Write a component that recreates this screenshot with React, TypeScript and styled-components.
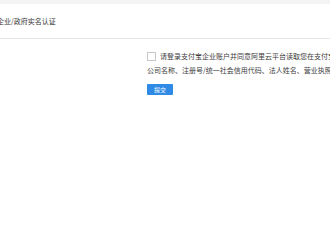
import styled, { createGlobalStyle } from 'styled-components';

const GlobalStyle = createGlobalStyle`
    html, body {
        margin: 0;
        padding: 0;
        background: #fff;
        overflow: hidden;
    }
    body {
        font-family: "Noto Sans CJK SC", "Liberation Sans", sans-serif;
    }
`;

const Page = styled.div`
    width: 330px;
    height: 200px;
    overflow: hidden;
    background: #f4f4f4;
    padding-top: 4px;
    box-sizing: border-box;
    display: flex;
    flex-direction: column;
`;

const Header = styled.div`
    height: 35px;
    flex: none;
    background: #fff;
    border-bottom: 1px solid #e6e6e6;
    display: flex;
    align-items: center;
    padding-top: 1px;
    box-sizing: border-box;
`;

const Title = styled.h1`
    margin: 0 0 0 -3px;
    font-size: 7px;
    line-height: 9px;
    font-weight: 400;
    color: #333;
    white-space: nowrap;
`;

const Body = styled.div`
    flex: 1;
    background: #fff;
    padding: 13px 0 0 147px;
    box-sizing: border-box;
    font-size: 7px;
    line-height: 9px;
`;

const AgreeRow = styled.label`
    display: flex;
    align-items: center;
    gap: 4px;
    height: 9px;
    white-space: nowrap;
`;

const Box = styled.span`
    width: 7px;
    height: 7px;
    border: 1px solid #c8c8c8;
    background: #fff;
    flex: none;
`;

const Text = styled.span`
    font-size: 7px;
    line-height: 9px;
    color: #3c3c3c;
    white-space: nowrap;
`;

const Line = styled.div`
    margin-top: 5px;
    height: 9px;
    white-space: nowrap;
`;

const Submit = styled.button`
    margin-top: 9px;
    width: 26px;
    height: 11px;
    border: none;
    border-radius: 1px;
    background: #2f8ae5;
    color: #fff;
    font-family: "Noto Sans CJK SC", sans-serif;
    font-size: 6px;
    line-height: 11px;
    padding: 0;
    display: block;
`;

export default function App() {
    return (
        <>
            <GlobalStyle />
            <Page>
                <Header>
                    <Title>企业/政府实名认证</Title>
                </Header>
                <Body>
                    <AgreeRow>
                        <Box />
                        <Text>请登录支付宝企业账户并同意阿里云平台读取您在支付宝企业账户中的认证信息</Text>
                    </AgreeRow>
                    <Line>
                        <Text>公司名称、注册号/统一社会信用代码、法人姓名、营业执照有效期等</Text>
                    </Line>
                    <Submit>提交</Submit>
                </Body>
            </Page>
        </>
    );
}
